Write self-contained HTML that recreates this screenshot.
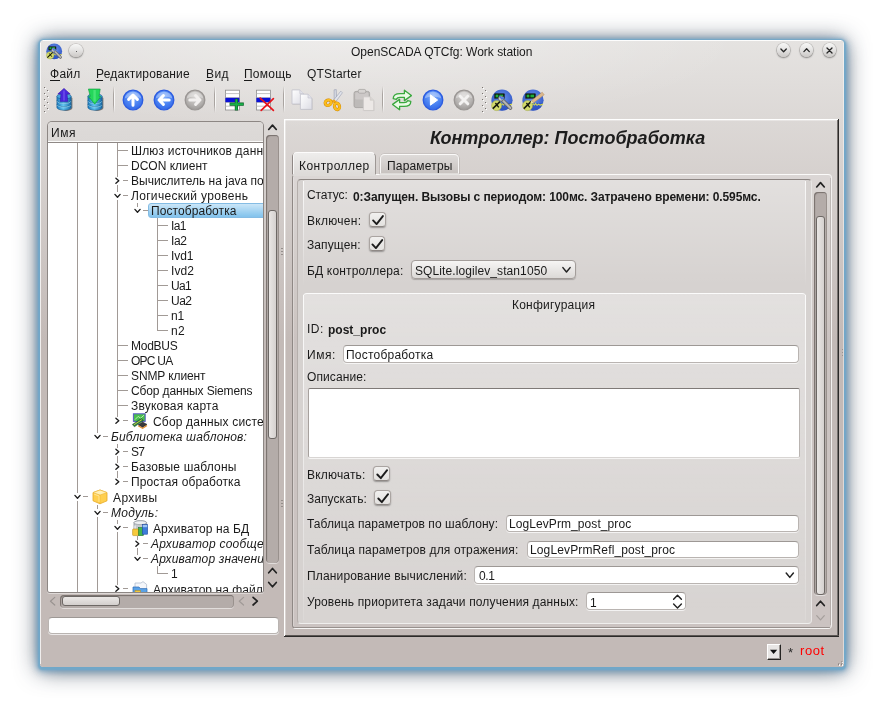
<!DOCTYPE html>
<html lang="ru">
<head>
<meta charset="utf-8">
<title>OpenSCADA QTCfg: Work station</title>
<style>
html,body{margin:0;padding:0;background:#fff;}
body{width:884px;height:707px;position:relative;overflow:hidden;font-family:"Liberation Sans",sans-serif;font-size:12px;}
div,span,svg{position:absolute;box-sizing:border-box;}
span{will-change:transform;}
svg{overflow:visible;}
.le{background:#fff;border:1px solid #b9b4b1;border-top-color:#9d9895;border-radius:4px;box-shadow:0 1px 0 rgba(255,255,255,.7);}
.cb{border-radius:3.5px;border:1px solid #aaa4a1;border-bottom-color:#8f8986;background:linear-gradient(#f1f0ef,#e3e1df);box-shadow:0 1px 1.5px rgba(0,0,0,.32);}
.wb{border-radius:50%;background:linear-gradient(#f7f7f6,#e6e5e4 45%,#cbc8c6);box-shadow:0 0 0 .6px rgba(90,85,82,.28),0 1px 1.5px .3px rgba(0,0,0,.3);}
</style>
</head>
<body>
<div style="left:40px;top:40px;width:804px;height:627px;border-radius:4px 4px 3px 3px;box-shadow:0 .8px 1.5px 1.6px rgba(112,168,202,.9),0 1.5px 5px 2.5px rgba(100,156,196,.6),0 2px 10px 3px rgba(80,130,175,.32),0 2px 23px 1px rgba(25,40,60,.74);background:radial-gradient(ellipse 400px 90px at 38% 0,rgba(255,255,255,.32),rgba(255,255,255,0)),linear-gradient(to bottom,#e5e3e1 0,#c3bab7 300px,#c3bab7 100%);"></div>
<div style="left:43px;top:40px;width:798px;height:1px;background:rgba(255,255,255,.9);"></div>
<div style="left:40px;top:43px;width:1px;height:621px;background:rgba(255,255,255,.75);"></div>
<div style="left:843px;top:43px;width:1px;height:621px;background:rgba(255,255,255,.45);"></div>
<svg style="left:46px;top:43px" width="16.4" height="16.4" viewBox="0 0 22 22"><circle cx="11" cy="11.2" r="10.6" fill="url(#gapp)"/><path d="M1.2 15 A10.6 10.6 0 0 0 20.8 15 L20.8 14 L1.2 14 Z" fill="#2a4fc0" opacity=".55"/><path d="M9.6 15.2 L11.4 14.2 L12.4 15.6 L13.6 13.6 L15 15.8 L16.6 14.4 L18 15.6 L21 14.6 L21 16 L18 16.8 L16.6 15.8 L15 17 L13.6 15.4 L12.4 16.8 L11.4 15.6 L9.6 16.4 Z" fill="#d8dc50"/><circle cx="5.6" cy="16.6" r="5" fill="#d3db6c" stroke="#9aa23a" stroke-width=".5"/><path d="M1.8 19.6 L9 12.6" stroke="#15180c" stroke-width="1.5"/><path d="M4.4 14 L7.8 18.4" stroke="#15180c" stroke-width="1.3"/><rect x="3.4" y="4.6" width="10.2" height="5" rx=".6" fill="#0c120e" stroke="#2c3a36" stroke-width=".4"/><rect x="4.6" y="5.6" width="2.8" height="2.8" fill="#1fae3a"/><rect x="8.4" y="5.6" width="3.8" height="2.8" fill="#1fae3a"/><path d="M10.4 10 L19.4 19" stroke="#5e5e5e" stroke-width="3.8" stroke-linecap="round"/><path d="M10.4 10 L19.4 19" stroke="#b4b4b4" stroke-width="2.3" stroke-linecap="round"/><circle cx="10" cy="9.6" r="2.6" fill="#c8c8c8" stroke="#5e5e5e" stroke-width=".8"/><path d="M8.4 7 L11 9.8 L12.8 8.2" fill="none" stroke="#4a78e0" stroke-width="1.6"/></svg>
<div class="wb" style="left:69.3px;top:43.6px;width:13.6px;height:13.6px"></div>
<div style="left:75.5px;top:50.5px;width:1.4px;height:1.4px;background:#333;border-radius:50%;"></div>
<span style='left:351.20px;top:44.14px;line-height:16px;font-family:"Liberation Sans", sans-serif;font-size:12px;color:#1a1a1a;white-space:pre;letter-spacing:-0.016px;'>OpenSCADA QTCfg: Work station</span>
<div class="wb" style="left:776.8000000000001px;top:43.4px;width:13.6px;height:13.6px"></div>
<svg style="left:773px;top:40px" width="20" height="20"><g transform="translate(10.60 10.30)"><path d="M-2.7 -1.3 L0 1.5 L2.7 -1.3" fill="none" stroke="#262626" stroke-width="1.3" stroke-linecap="round" stroke-linejoin="round"/></g></svg>
<div class="wb" style="left:799.8000000000001px;top:43.4px;width:13.6px;height:13.6px"></div>
<svg style="left:796px;top:40px" width="20" height="20"><g transform="translate(10.60 10.30)"><path d="M-2.7 1.3 L0 -1.5 L2.7 1.3" fill="none" stroke="#262626" stroke-width="1.3" stroke-linecap="round" stroke-linejoin="round"/></g></svg>
<div class="wb" style="left:822.7px;top:43.4px;width:13.6px;height:13.6px"></div>
<svg style="left:819px;top:40px" width="20" height="20"><g transform="translate(10.50 10.50)"><path d="M-2.5 -2.5 L2.5 2.5 M2.5 -2.5 L-2.5 2.5" fill="none" stroke="#262626" stroke-width="1.3" stroke-linecap="round" stroke-linejoin="round"/></g></svg>
<span style='left:50.00px;top:66.34px;line-height:16px;font-family:"Liberation Sans", sans-serif;font-size:12px;color:#1a1a1a;white-space:pre;letter-spacing:0.261px;'>Файл</span>
<div style="left:50.1px;top:79.6px;width:9.8px;height:1px;background:#1a1a1a;"></div>
<span style='left:96.20px;top:66.34px;line-height:16px;font-family:"Liberation Sans", sans-serif;font-size:12px;color:#1a1a1a;white-space:pre;letter-spacing:0.168px;'>Редактирование</span>
<div style="left:96.3px;top:79.6px;width:6.6px;height:1px;background:#1a1a1a;"></div>
<span style='left:205.80px;top:66.34px;line-height:16px;font-family:"Liberation Sans", sans-serif;font-size:12px;color:#1a1a1a;white-space:pre;letter-spacing:0.441px;'>Вид</span>
<div style="left:205.9px;top:79.6px;width:7.4px;height:1px;background:#1a1a1a;"></div>
<span style='left:243.90px;top:66.34px;line-height:16px;font-family:"Liberation Sans", sans-serif;font-size:12px;color:#1a1a1a;white-space:pre;letter-spacing:0.248px;'>Помощь</span>
<div style="left:244.0px;top:79.6px;width:8.2px;height:1px;background:#1a1a1a;"></div>
<span style='left:307.20px;top:66.34px;line-height:16px;font-family:"Liberation Sans", sans-serif;font-size:12px;color:#1a1a1a;white-space:pre;letter-spacing:0.227px;'>QTStarter</span>
<svg style="left:0;top:0" width="0" height="0"><defs>
<radialGradient id="gb" cx="50%" cy="35%" r="65%"><stop offset="0" stop-color="#86b2fb"/><stop offset=".6" stop-color="#4a82f2"/><stop offset="1" stop-color="#3468e6"/></radialGradient>
<radialGradient id="gg" cx="50%" cy="35%" r="65%"><stop offset="0" stop-color="#d8d6d4"/><stop offset=".6" stop-color="#b9b6b4"/><stop offset="1" stop-color="#9d9a98"/></radialGradient>
<linearGradient id="gdb" x1="0" x2="1"><stop offset="0" stop-color="#1b78bd"/><stop offset=".45" stop-color="#66c6f0"/><stop offset="1" stop-color="#176aa8"/></linearGradient>
<linearGradient id="gpg" x1="0" x2="1" y1="0" y2="1"><stop offset="0" stop-color="#ffffff"/><stop offset="1" stop-color="#dcdce4"/></linearGradient>
<radialGradient id="gapp" cx="50%" cy="40%" r="60%"><stop offset="0" stop-color="#6d97f0"/><stop offset="1" stop-color="#2f55c4"/></radialGradient>
</defs></svg>
<div style="left:44px;top:87px;width:1px;height:1px;background:#77726f;"></div>
<div style="left:45px;top:88px;width:1px;height:1px;background:#fff;"></div>
<div style="left:47px;top:90px;width:1px;height:1px;background:#77726f;"></div>
<div style="left:48px;top:91px;width:1px;height:1px;background:#fff;"></div>
<div style="left:44px;top:93px;width:1px;height:1px;background:#77726f;"></div>
<div style="left:45px;top:94px;width:1px;height:1px;background:#fff;"></div>
<div style="left:47px;top:96px;width:1px;height:1px;background:#77726f;"></div>
<div style="left:48px;top:97px;width:1px;height:1px;background:#fff;"></div>
<div style="left:44px;top:99px;width:1px;height:1px;background:#77726f;"></div>
<div style="left:45px;top:100px;width:1px;height:1px;background:#fff;"></div>
<div style="left:47px;top:102px;width:1px;height:1px;background:#77726f;"></div>
<div style="left:48px;top:103px;width:1px;height:1px;background:#fff;"></div>
<div style="left:44px;top:105px;width:1px;height:1px;background:#77726f;"></div>
<div style="left:45px;top:106px;width:1px;height:1px;background:#fff;"></div>
<div style="left:47px;top:108px;width:1px;height:1px;background:#77726f;"></div>
<div style="left:48px;top:109px;width:1px;height:1px;background:#fff;"></div>
<div style="left:44px;top:111px;width:1px;height:1px;background:#77726f;"></div>
<div style="left:45px;top:112px;width:1px;height:1px;background:#fff;"></div>
<div style="left:482px;top:87px;width:1px;height:1px;background:#77726f;"></div>
<div style="left:483px;top:88px;width:1px;height:1px;background:#fff;"></div>
<div style="left:485px;top:90px;width:1px;height:1px;background:#77726f;"></div>
<div style="left:486px;top:91px;width:1px;height:1px;background:#fff;"></div>
<div style="left:482px;top:93px;width:1px;height:1px;background:#77726f;"></div>
<div style="left:483px;top:94px;width:1px;height:1px;background:#fff;"></div>
<div style="left:485px;top:96px;width:1px;height:1px;background:#77726f;"></div>
<div style="left:486px;top:97px;width:1px;height:1px;background:#fff;"></div>
<div style="left:482px;top:99px;width:1px;height:1px;background:#77726f;"></div>
<div style="left:483px;top:100px;width:1px;height:1px;background:#fff;"></div>
<div style="left:485px;top:102px;width:1px;height:1px;background:#77726f;"></div>
<div style="left:486px;top:103px;width:1px;height:1px;background:#fff;"></div>
<div style="left:482px;top:105px;width:1px;height:1px;background:#77726f;"></div>
<div style="left:483px;top:106px;width:1px;height:1px;background:#fff;"></div>
<div style="left:485px;top:108px;width:1px;height:1px;background:#77726f;"></div>
<div style="left:486px;top:109px;width:1px;height:1px;background:#fff;"></div>
<div style="left:482px;top:111px;width:1px;height:1px;background:#77726f;"></div>
<div style="left:483px;top:112px;width:1px;height:1px;background:#fff;"></div>
<div style="left:113.4px;top:86px;width:1px;height:27px;background:linear-gradient(rgba(150,144,140,0),rgba(150,144,140,.75) 30%,rgba(150,144,140,.75) 70%,rgba(150,144,140,0));"></div>
<div style="left:114.4px;top:86px;width:1px;height:27px;background:linear-gradient(rgba(255,255,255,0),rgba(255,255,255,.8) 30%,rgba(255,255,255,.8) 70%,rgba(255,255,255,0));"></div>
<div style="left:213.79999999999998px;top:86px;width:1px;height:27px;background:linear-gradient(rgba(150,144,140,0),rgba(150,144,140,.75) 30%,rgba(150,144,140,.75) 70%,rgba(150,144,140,0));"></div>
<div style="left:214.79999999999998px;top:86px;width:1px;height:27px;background:linear-gradient(rgba(255,255,255,0),rgba(255,255,255,.8) 30%,rgba(255,255,255,.8) 70%,rgba(255,255,255,0));"></div>
<div style="left:282.7px;top:86px;width:1px;height:27px;background:linear-gradient(rgba(150,144,140,0),rgba(150,144,140,.75) 30%,rgba(150,144,140,.75) 70%,rgba(150,144,140,0));"></div>
<div style="left:283.7px;top:86px;width:1px;height:27px;background:linear-gradient(rgba(255,255,255,0),rgba(255,255,255,.8) 30%,rgba(255,255,255,.8) 70%,rgba(255,255,255,0));"></div>
<div style="left:382.2px;top:86px;width:1px;height:27px;background:linear-gradient(rgba(150,144,140,0),rgba(150,144,140,.75) 30%,rgba(150,144,140,.75) 70%,rgba(150,144,140,0));"></div>
<div style="left:383.2px;top:86px;width:1px;height:27px;background:linear-gradient(rgba(255,255,255,0),rgba(255,255,255,.8) 30%,rgba(255,255,255,.8) 70%,rgba(255,255,255,0));"></div>
<svg style="left:53.2px;top:89px" width="22" height="22" viewBox="0 0 22 22"><path d="M18.1 8 V18.6 A7.1 2.8 0 0 1 9 21 L12 22 A8 3 0 0 0 19.4 18.8 V9 Z" fill="rgba(20,20,20,.5)"/><path d="M3.9 7.4 V18.4 A7.1 2.8 0 0 0 18.1 18.4 V7.4 Z" fill="url(#gdb)" stroke="#155a8e" stroke-width=".6"/><path d="M3.9 11.4 A7.1 2.7 0 0 0 18.1 11.4 M3.9 15 A7.1 2.7 0 0 0 18.1 15" fill="none" stroke="#135584" stroke-width=".8" opacity=".75"/><path d="M4.2 12.4 A7 2.7 0 0 0 17.8 12.4 M4.2 16 A7 2.7 0 0 0 17.8 16" fill="none" stroke="#a8e6fc" stroke-width=".8" opacity=".8"/><ellipse cx="11" cy="7.4" rx="7.1" ry="2.7" fill="#4aa8de" stroke="#155a8e" stroke-width=".6"/><path d="M11 -0.6 L17.2 5 L14 5 L14.8 12.4 L7.2 12.4 L8 5 L4.8 5 Z" fill="#4a28dc" stroke="#3318a8" stroke-width=".6" stroke-linejoin="round"/><path d="M11 1.4 L11 11.6" stroke="#7a5cf0" stroke-width="2" opacity=".55"/></svg>
<svg style="left:84.4px;top:89px" width="22" height="22" viewBox="0 0 22 22"><path d="M18.1 8 V18.6 A7.1 2.8 0 0 1 9 21 L12 22 A8 3 0 0 0 19.4 18.8 V9 Z" fill="rgba(20,20,20,.5)"/><path d="M3.9 7.4 V18.4 A7.1 2.8 0 0 0 18.1 18.4 V7.4 Z" fill="url(#gdb)" stroke="#155a8e" stroke-width=".6"/><path d="M3.9 11.4 A7.1 2.7 0 0 0 18.1 11.4 M3.9 15 A7.1 2.7 0 0 0 18.1 15" fill="none" stroke="#135584" stroke-width=".8" opacity=".75"/><path d="M4.2 12.4 A7 2.7 0 0 0 17.8 12.4 M4.2 16 A7 2.7 0 0 0 17.8 16" fill="none" stroke="#a8e6fc" stroke-width=".8" opacity=".8"/><ellipse cx="11" cy="7.4" rx="7.1" ry="2.7" fill="#4aa8de" stroke="#155a8e" stroke-width=".6"/><path d="M4.4 0 L16.2 0 L15 7.4 L16.9 7.4 L10.7 15.2 L4.5 7.4 L6.3 7.4 Z" fill="#24d65a" stroke="#0e9a3a" stroke-width=".6" stroke-linejoin="round"/><path d="M10.6 1 L10.6 12.6" stroke="#6af090" stroke-width="2.4" opacity=".5"/></svg>
<svg style="left:122.0px;top:88.9px" width="22" height="22" viewBox="0 0 22 22"><circle cx="11" cy="11" r="9.8" fill="url(#gb)" stroke="#2c5ce0" stroke-width="1.3"/><path d="M2.6 9.4 A8.6 8.6 0 0 1 19.4 9.4 A13 8 0 0 0 2.6 9.4Z" fill="#fff" opacity=".33"/><path d="M11 6.2 V16.2 M6.6 10.4 L11 6 L15.4 10.4" stroke="#fff" stroke-width="3" fill="none" stroke-linecap="round" stroke-linejoin="round"/></svg>
<svg style="left:153.2px;top:88.9px" width="22" height="22" viewBox="0 0 22 22"><circle cx="11" cy="11" r="9.8" fill="url(#gb)" stroke="#2c5ce0" stroke-width="1.3"/><path d="M2.6 9.4 A8.6 8.6 0 0 1 19.4 9.4 A13 8 0 0 0 2.6 9.4Z" fill="#fff" opacity=".33"/><path d="M6.2 11 H16.2 M10.4 6.6 L6 11 L10.4 15.4" stroke="#fff" stroke-width="3" fill="none" stroke-linecap="round" stroke-linejoin="round"/></svg>
<svg style="left:184.2px;top:88.9px" width="22" height="22" viewBox="0 0 22 22"><circle cx="11" cy="11" r="9.8" fill="url(#gg)" stroke="#9a9694" stroke-width="1.3"/><path d="M2.6 9.4 A8.6 8.6 0 0 1 19.4 9.4 A13 8 0 0 0 2.6 9.4Z" fill="#fff" opacity=".33"/><path d="M15.8 11 H5.8 M11.6 6.6 L16 11 L11.6 15.4" stroke="#f2f0ef" stroke-width="3" fill="none" stroke-linecap="round" stroke-linejoin="round"/></svg>
<svg style="left:422.0px;top:88.9px" width="22" height="22" viewBox="0 0 22 22"><circle cx="11" cy="11" r="9.8" fill="url(#gb)" stroke="#2c5ce0" stroke-width="1.3"/><path d="M2.6 9.4 A8.6 8.6 0 0 1 19.4 9.4 A13 8 0 0 0 2.6 9.4Z" fill="#fff" opacity=".33"/><path d="M8.4 5.8 L15.6 11 L8.4 16.2 Z" fill="#fff" stroke="#fff" stroke-width="1" stroke-linejoin="round"/></svg>
<svg style="left:453.3px;top:88.9px" width="22" height="22" viewBox="0 0 22 22"><circle cx="11" cy="11" r="9.8" fill="url(#gg)" stroke="#9a9694" stroke-width="1.3"/><path d="M2.6 9.4 A8.6 8.6 0 0 1 19.4 9.4 A13 8 0 0 0 2.6 9.4Z" fill="#fff" opacity=".33"/><path d="M7.2 7.2 L14.8 14.8 M14.8 7.2 L7.2 14.8" stroke="#f3f2f1" stroke-width="3" stroke-linecap="round"/></svg>
<svg style="left:224.0px;top:89px" width="22" height="22" viewBox="0 0 22 22"><rect x="1.4" y="1.2" width="14" height="19.8" fill="#fff" stroke="#8c8c8c" stroke-width=".8"/><path d="M1.4 4.6 H15.4 M1.4 8.6 H15.4 M1.4 13.4 H15.4 M1.4 17.2 H15.4" stroke="#b4b4b4" stroke-width=".8"/><rect x="1.4" y="8.8" width="14" height="4.4" fill="#0a10d8"/><path d="M12.4 9.8 V21.6 M5.6 15.2 H19.8" stroke="#0c5a24" stroke-width="3.2"/><path d="M12.4 10.3 V21.1 M6.1 15.2 H19.3" stroke="#18b048" stroke-width="2"/></svg>
<svg style="left:255.0px;top:89px" width="22" height="22" viewBox="0 0 22 22"><rect x="1.4" y="1.2" width="14" height="19.8" fill="#fff" stroke="#8c8c8c" stroke-width=".8"/><path d="M1.4 4.6 H15.4 M1.4 8.6 H15.4 M1.4 13.4 H15.4 M1.4 17.2 H15.4" stroke="#b4b4b4" stroke-width=".8"/><rect x="1.4" y="8.8" width="14" height="4.4" fill="#0a10d8"/><path d="M5.2 9.2 L18.4 21.4 M18.4 9.6 L6.2 21.4" stroke="#e8141c" stroke-width="1.7" stroke-linecap="round"/></svg>
<svg style="left:291px;top:89px" width="22" height="22" viewBox="0 0 22 22"><path d="M1.6 2 H9.4 L13 5.4 V15.8 H1.6Z" fill="rgba(0,0,0,.10)"/><path d="M1 .9 H8.8 L12.5 4.6 V15 H1Z" fill="url(#gpg)" stroke="#c2c2cc" stroke-width=".8"/><path d="M8.8 .9 V4.6 H12.5" fill="#e2e2ea" stroke="#c2c2cc" stroke-width=".6"/><path d="M10 6.4 H17.6 L21.6 10 V21 H10Z" fill="rgba(0,0,0,.10)"/><path d="M9.4 5.2 H17 L20.9 9 V20.4 H9.4Z" fill="url(#gpg)" stroke="#c2c2cc" stroke-width=".8"/><path d="M17 5.2 V9 H20.9" fill="#e2e2ea" stroke="#c2c2cc" stroke-width=".6"/></svg>
<svg style="left:322px;top:89px" width="22" height="22" viewBox="0 0 22 22"><path d="M12.1 .8 L14.3 .6 L14.6 11.2 L12.2 12 Z" fill="#d4d8e2" stroke="#8a90a6" stroke-width=".5"/><path d="M18.8 2.2 L20.4 3.8 L13.8 12.6 L11.6 11 Z" fill="#e2e5ec" stroke="#8a90a6" stroke-width=".5"/><path d="M8.4 12 L12.4 10.4 L14.2 12.6 L14.6 14.6 L12.6 14.4 L11 13.4 Z" fill="#f2a818"/><ellipse cx="6.2" cy="13.7" rx="3.1" ry="2.6" transform="rotate(-22 6.2 13.7)" fill="none" stroke="#c98208" stroke-width="3.1"/><ellipse cx="6.2" cy="13.7" rx="3.1" ry="2.6" transform="rotate(-22 6.2 13.7)" fill="none" stroke="#fbbc1c" stroke-width="2.2"/><ellipse cx="15" cy="17.4" rx="2.5" ry="3.3" transform="rotate(-18 15 17.4)" fill="none" stroke="#c98208" stroke-width="3.1"/><ellipse cx="15" cy="17.4" rx="2.5" ry="3.3" transform="rotate(-18 15 17.4)" fill="none" stroke="#fbbc1c" stroke-width="2.2"/></svg>
<svg style="left:353px;top:89px" width="22" height="22" viewBox="0 0 22 22"><rect x="1" y="2.4" width="15.6" height="16.2" rx="2" fill="#bdbab8" stroke="#a29f9d" stroke-width=".8"/><rect x="2.2" y="3.6" width="13.2" height="7" rx="1.4" fill="#cfccca" opacity=".8"/><rect x="5.2" y=".4" width="7.6" height="3.8" rx="1.6" fill="#d6d3d1" stroke="#a29f9d" stroke-width=".7"/><path d="M11 8.8 H17.8 L21.2 12 V22 H11Z" fill="rgba(0,0,0,.12)"/><path d="M10.4 7.8 H17.2 L20.8 11.2 V21.6 H10.4Z" fill="#ece8e6" stroke="#cbc7c5" stroke-width=".8"/><path d="M17.2 7.8 V11.2 H20.8" fill="#d9d5d3" stroke="#cbc7c5" stroke-width=".6"/></svg>
<svg style="left:391px;top:88.6px" width="22" height="22" viewBox="0 0 22 22"><path d="M2.2 9.6 C2.2 5.4 6 4.6 9 4.6 H13.4 V1.2 L20.4 6.6 L13.4 11.6 V8.4 H9 C7 8.4 6 8.8 5.2 10.4 Z" fill="#eafbe6" stroke="#3aa83e" stroke-width="1.3" stroke-linejoin="round"/><path d="M19.8 12.4 C19.8 16.6 16 17.4 13 17.4 H8.6 V20.8 L1.6 15.4 L8.6 10.4 V13.6 H13 C15 13.6 16 13.2 16.8 11.6 Z" fill="#eafbe6" stroke="#3aa83e" stroke-width="1.3" stroke-linejoin="round"/></svg>
<svg style="left:491.0px;top:88.8px" width="22" height="22" viewBox="0 0 22 22"><circle cx="11" cy="11.2" r="10.6" fill="url(#gapp)"/><path d="M1.2 15 A10.6 10.6 0 0 0 20.8 15 L20.8 14 L1.2 14 Z" fill="#2a4fc0" opacity=".55"/><path d="M9.6 15.2 L11.4 14.2 L12.4 15.6 L13.6 13.6 L15 15.8 L16.6 14.4 L18 15.6 L21 14.6 L21 16 L18 16.8 L16.6 15.8 L15 17 L13.6 15.4 L12.4 16.8 L11.4 15.6 L9.6 16.4 Z" fill="#d8dc50"/><circle cx="5.6" cy="16.6" r="5" fill="#d3db6c" stroke="#9aa23a" stroke-width=".5"/><path d="M1.8 19.6 L9 12.6" stroke="#15180c" stroke-width="1.5"/><path d="M4.4 14 L7.8 18.4" stroke="#15180c" stroke-width="1.3"/><rect x="3.4" y="4.6" width="10.2" height="5" rx=".6" fill="#0c120e" stroke="#2c3a36" stroke-width=".4"/><rect x="4.6" y="5.6" width="2.8" height="2.8" fill="#1fae3a"/><rect x="8.4" y="5.6" width="3.8" height="2.8" fill="#1fae3a"/><path d="M10.4 10 L19.4 19" stroke="#5e5e5e" stroke-width="3.8" stroke-linecap="round"/><path d="M10.4 10 L19.4 19" stroke="#b4b4b4" stroke-width="2.3" stroke-linecap="round"/><circle cx="10" cy="9.6" r="2.6" fill="#c8c8c8" stroke="#5e5e5e" stroke-width=".8"/><path d="M8.4 7 L11 9.8 L12.8 8.2" fill="none" stroke="#4a78e0" stroke-width="1.6"/></svg>
<svg style="left:522.0px;top:88.8px" width="22" height="22" viewBox="0 0 22 22"><circle cx="11" cy="11.2" r="10.6" fill="url(#gapp)"/><path d="M1.2 15 A10.6 10.6 0 0 0 20.8 15 L20.8 14 L1.2 14 Z" fill="#2a4fc0" opacity=".55"/><path d="M9.6 15.2 L11.4 14.2 L12.4 15.6 L13.6 13.6 L15 15.8 L16.6 14.4 L18 15.6 L21 14.6 L21 16 L18 16.8 L16.6 15.8 L15 17 L13.6 15.4 L12.4 16.8 L11.4 15.6 L9.6 16.4 Z" fill="#d8dc50"/><circle cx="5.6" cy="16.6" r="5" fill="#d3db6c" stroke="#9aa23a" stroke-width=".5"/><path d="M1.8 19.6 L9 12.6" stroke="#15180c" stroke-width="1.5"/><path d="M4.4 14 L7.8 18.4" stroke="#15180c" stroke-width="1.3"/><rect x="3.4" y="4.6" width="10.2" height="5" rx=".6" fill="#0c120e" stroke="#2c3a36" stroke-width=".4"/><rect x="4.6" y="5.6" width="2.8" height="2.8" fill="#1fae3a"/><rect x="8.4" y="5.6" width="3.8" height="2.8" fill="#1fae3a"/><path d="M9.6 11.4 L20.2 3.2 L22.2 5.8 L11.4 14 Z" fill="#dcb88c" stroke="#b08a60" stroke-width=".5"/><path d="M9.6 11.4 L11.4 14 L8.2 14.2 Z" fill="#e8e2a0"/></svg>
<div style="left:48px;top:122px;width:215px;height:470px;border-radius:4px 4px 2px 2px;box-shadow:0 0 0 1px #8d8784,0 1px 0 1px rgba(255,255,255,.45);background:linear-gradient(#dddad8,#dbd8d6 21px,#fff 21px);"></div>
<div style="left:48px;top:141px;width:215px;height:1px;background:#fbfbfa;"></div>
<div style="left:48px;top:142px;width:215px;height:1px;background:#8f8986;"></div>
<span style='left:51.10px;top:125.44px;line-height:16px;font-family:"Liberation Sans", sans-serif;font-size:12px;color:#1a1a1a;white-space:pre;letter-spacing:0.613px;'>Имя</span>
<div style="left:48px;top:143px;width:215px;height:449px;overflow:hidden;">
<div style="left:29px;top:0.3px;width:1px;height:15px;background:#a19a96;"></div>
<div style="left:49px;top:0.3px;width:1px;height:15px;background:#a19a96;"></div>
<div style="left:69px;top:0.3px;width:1px;height:15px;background:#a19a96;"></div>
<div style="left:69px;top:7px;width:11px;height:1px;background:#a19a96;"></div>
<span style='left:82.90px;top:0.14px;line-height:16px;font-family:"Liberation Sans", sans-serif;font-size:12px;color:#1a1a1a;white-space:pre;letter-spacing:0.185px;'>Шлюз источников данных</span>
<div style="left:29px;top:15.3px;width:1px;height:15px;background:#a19a96;"></div>
<div style="left:49px;top:15.3px;width:1px;height:15px;background:#a19a96;"></div>
<div style="left:69px;top:15.3px;width:1px;height:15px;background:#a19a96;"></div>
<div style="left:69px;top:22px;width:11px;height:1px;background:#a19a96;"></div>
<span style='left:82.90px;top:15.14px;line-height:16px;font-family:"Liberation Sans", sans-serif;font-size:12px;color:#1a1a1a;white-space:pre;letter-spacing:-0.006px;'>DCON клиент</span>
<div style="left:29px;top:30.3px;width:1px;height:15px;background:#a19a96;"></div>
<div style="left:49px;top:30.3px;width:1px;height:15px;background:#a19a96;"></div>
<div style="left:69px;top:30.3px;width:1px;height:4.0px;background:#a19a96;"></div>
<div style="left:69px;top:41.8px;width:1px;height:3.5px;background:#a19a96;"></div>
<div style="left:75px;top:37px;width:5px;height:1px;background:#a19a96;"></div>
<svg style="left:59px;top:27px" width="20" height="20"><g transform="translate(10.50 10.80)"><path d="M-1.6 -2.5 L1.3 0 L-1.6 2.5" fill="none" stroke="#1c1c1c" stroke-width="1.35" stroke-linecap="round" stroke-linejoin="round"/></g></svg>
<span style='left:82.90px;top:30.14px;line-height:16px;font-family:"Liberation Sans", sans-serif;font-size:12px;color:#1a1a1a;white-space:pre;letter-spacing:0.006px;'>Вычислитель на java подобном языке</span>
<div style="left:29px;top:45.3px;width:1px;height:15px;background:#a19a96;"></div>
<div style="left:49px;top:45.3px;width:1px;height:15px;background:#a19a96;"></div>
<div style="left:69px;top:45.3px;width:1px;height:4.0px;background:#a19a96;"></div>
<div style="left:69px;top:56.8px;width:1px;height:3.5px;background:#a19a96;"></div>
<div style="left:75px;top:52px;width:5px;height:1px;background:#a19a96;"></div>
<svg style="left:59px;top:42px" width="20" height="20"><g transform="translate(10.50 10.80)"><path d="M-2.6 -1.4 L0 1.4 L2.6 -1.4" fill="none" stroke="#1c1c1c" stroke-width="1.35" stroke-linecap="round" stroke-linejoin="round"/></g></svg>
<span style='left:82.90px;top:45.14px;line-height:16px;font-family:"Liberation Sans", sans-serif;font-size:12px;color:#1a1a1a;white-space:pre;letter-spacing:0.314px;'>Логический уровень</span>
<div style="left:29px;top:60.3px;width:1px;height:15px;background:#a19a96;"></div>
<div style="left:49px;top:60.3px;width:1px;height:15px;background:#a19a96;"></div>
<div style="left:69px;top:60.3px;width:1px;height:15px;background:#a19a96;"></div>
<div style="left:89px;top:60.3px;width:1px;height:4.0px;background:#a19a96;"></div>
<div style="left:95px;top:67px;width:5px;height:1px;background:#a19a96;"></div>
<svg style="left:79px;top:57px" width="20" height="20"><g transform="translate(10.50 10.80)"><path d="M-2.6 -1.4 L0 1.4 L2.6 -1.4" fill="none" stroke="#1c1c1c" stroke-width="1.35" stroke-linecap="round" stroke-linejoin="round"/></g></svg>
<div style="left:100.2px;top:60.0px;width:118.80000000000001px;height:15.2px;border-radius:3px;border:1px solid #84bce4;background:linear-gradient(#cbe6f8,#8cc8ee 85%,#84c2ec);"></div>
<span style='left:102.90px;top:60.14px;line-height:16px;font-family:"Liberation Sans", sans-serif;font-size:12px;color:#1a1a1a;white-space:pre;letter-spacing:0.072px;'>Постобработка</span>
<div style="left:29px;top:75.3px;width:1px;height:15px;background:#a19a96;"></div>
<div style="left:49px;top:75.3px;width:1px;height:15px;background:#a19a96;"></div>
<div style="left:69px;top:75.3px;width:1px;height:15px;background:#a19a96;"></div>
<div style="left:109px;top:75.3px;width:1px;height:15px;background:#a19a96;"></div>
<div style="left:109px;top:82px;width:11px;height:1px;background:#a19a96;"></div>
<span style='left:122.90px;top:75.14px;line-height:16px;font-family:"Liberation Sans", sans-serif;font-size:12px;color:#1a1a1a;white-space:pre;letter-spacing:-0.644px;'>Ia1</span>
<div style="left:29px;top:90.3px;width:1px;height:15px;background:#a19a96;"></div>
<div style="left:49px;top:90.3px;width:1px;height:15px;background:#a19a96;"></div>
<div style="left:69px;top:90.3px;width:1px;height:15px;background:#a19a96;"></div>
<div style="left:109px;top:90.3px;width:1px;height:15px;background:#a19a96;"></div>
<div style="left:109px;top:97px;width:11px;height:1px;background:#a19a96;"></div>
<span style='left:122.90px;top:90.14px;line-height:16px;font-family:"Liberation Sans", sans-serif;font-size:12px;color:#1a1a1a;white-space:pre;letter-spacing:-0.344px;'>Ia2</span>
<div style="left:29px;top:105.3px;width:1px;height:15px;background:#a19a96;"></div>
<div style="left:49px;top:105.3px;width:1px;height:15px;background:#a19a96;"></div>
<div style="left:69px;top:105.3px;width:1px;height:15px;background:#a19a96;"></div>
<div style="left:109px;top:105.3px;width:1px;height:15px;background:#a19a96;"></div>
<div style="left:109px;top:112px;width:11px;height:1px;background:#a19a96;"></div>
<span style='left:122.90px;top:105.14px;line-height:16px;font-family:"Liberation Sans", sans-serif;font-size:12px;color:#1a1a1a;white-space:pre;letter-spacing:-0.096px;'>Ivd1</span>
<div style="left:29px;top:120.3px;width:1px;height:15px;background:#a19a96;"></div>
<div style="left:49px;top:120.3px;width:1px;height:15px;background:#a19a96;"></div>
<div style="left:69px;top:120.3px;width:1px;height:15px;background:#a19a96;"></div>
<div style="left:109px;top:120.3px;width:1px;height:15px;background:#a19a96;"></div>
<div style="left:109px;top:127px;width:11px;height:1px;background:#a19a96;"></div>
<span style='left:122.90px;top:120.14px;line-height:16px;font-family:"Liberation Sans", sans-serif;font-size:12px;color:#1a1a1a;white-space:pre;letter-spacing:0.104px;'>Ivd2</span>
<div style="left:29px;top:135.3px;width:1px;height:15px;background:#a19a96;"></div>
<div style="left:49px;top:135.3px;width:1px;height:15px;background:#a19a96;"></div>
<div style="left:69px;top:135.3px;width:1px;height:15px;background:#a19a96;"></div>
<div style="left:109px;top:135.3px;width:1px;height:15px;background:#a19a96;"></div>
<div style="left:109px;top:142px;width:11px;height:1px;background:#a19a96;"></div>
<span style='left:122.90px;top:135.14px;line-height:16px;font-family:"Liberation Sans", sans-serif;font-size:12px;color:#1a1a1a;white-space:pre;letter-spacing:-0.708px;'>Ua1</span>
<div style="left:29px;top:150.3px;width:1px;height:15px;background:#a19a96;"></div>
<div style="left:49px;top:150.3px;width:1px;height:15px;background:#a19a96;"></div>
<div style="left:69px;top:150.3px;width:1px;height:15px;background:#a19a96;"></div>
<div style="left:109px;top:150.3px;width:1px;height:15px;background:#a19a96;"></div>
<div style="left:109px;top:157px;width:11px;height:1px;background:#a19a96;"></div>
<span style='left:122.90px;top:150.14px;line-height:16px;font-family:"Liberation Sans", sans-serif;font-size:12px;color:#1a1a1a;white-space:pre;letter-spacing:-0.508px;'>Ua2</span>
<div style="left:29px;top:165.3px;width:1px;height:15px;background:#a19a96;"></div>
<div style="left:49px;top:165.3px;width:1px;height:15px;background:#a19a96;"></div>
<div style="left:69px;top:165.3px;width:1px;height:15px;background:#a19a96;"></div>
<div style="left:109px;top:165.3px;width:1px;height:15px;background:#a19a96;"></div>
<div style="left:109px;top:172px;width:11px;height:1px;background:#a19a96;"></div>
<span style='left:122.90px;top:165.14px;line-height:16px;font-family:"Liberation Sans", sans-serif;font-size:12px;color:#1a1a1a;white-space:pre;letter-spacing:-0.159px;'>n1</span>
<div style="left:29px;top:180.3px;width:1px;height:15px;background:#a19a96;"></div>
<div style="left:49px;top:180.3px;width:1px;height:15px;background:#a19a96;"></div>
<div style="left:69px;top:180.3px;width:1px;height:15px;background:#a19a96;"></div>
<div style="left:109px;top:180.3px;width:1px;height:8.0px;background:#a19a96;"></div>
<div style="left:109px;top:187px;width:11px;height:1px;background:#a19a96;"></div>
<span style='left:122.90px;top:180.14px;line-height:16px;font-family:"Liberation Sans", sans-serif;font-size:12px;color:#1a1a1a;white-space:pre;letter-spacing:0.441px;'>n2</span>
<div style="left:29px;top:195.3px;width:1px;height:15px;background:#a19a96;"></div>
<div style="left:49px;top:195.3px;width:1px;height:15px;background:#a19a96;"></div>
<div style="left:69px;top:195.3px;width:1px;height:15px;background:#a19a96;"></div>
<div style="left:69px;top:202px;width:11px;height:1px;background:#a19a96;"></div>
<span style='left:82.90px;top:195.14px;line-height:16px;font-family:"Liberation Sans", sans-serif;font-size:12px;color:#1a1a1a;white-space:pre;letter-spacing:-0.246px;'>ModBUS</span>
<div style="left:29px;top:210.3px;width:1px;height:15px;background:#a19a96;"></div>
<div style="left:49px;top:210.3px;width:1px;height:15px;background:#a19a96;"></div>
<div style="left:69px;top:210.3px;width:1px;height:15px;background:#a19a96;"></div>
<div style="left:69px;top:217px;width:11px;height:1px;background:#a19a96;"></div>
<span style='left:82.90px;top:210.14px;line-height:16px;font-family:"Liberation Sans", sans-serif;font-size:12px;color:#1a1a1a;white-space:pre;letter-spacing:-0.763px;'>OPC UA</span>
<div style="left:29px;top:225.3px;width:1px;height:15px;background:#a19a96;"></div>
<div style="left:49px;top:225.3px;width:1px;height:15px;background:#a19a96;"></div>
<div style="left:69px;top:225.3px;width:1px;height:15px;background:#a19a96;"></div>
<div style="left:69px;top:232px;width:11px;height:1px;background:#a19a96;"></div>
<span style='left:82.90px;top:225.14px;line-height:16px;font-family:"Liberation Sans", sans-serif;font-size:12px;color:#1a1a1a;white-space:pre;letter-spacing:-0.109px;'>SNMP клиент</span>
<div style="left:29px;top:240.3px;width:1px;height:15px;background:#a19a96;"></div>
<div style="left:49px;top:240.3px;width:1px;height:15px;background:#a19a96;"></div>
<div style="left:69px;top:240.3px;width:1px;height:15px;background:#a19a96;"></div>
<div style="left:69px;top:247px;width:11px;height:1px;background:#a19a96;"></div>
<span style='left:82.90px;top:240.14px;line-height:16px;font-family:"Liberation Sans", sans-serif;font-size:12px;color:#1a1a1a;white-space:pre;letter-spacing:-0.122px;'>Сбор данных Siemens</span>
<div style="left:29px;top:255.3px;width:1px;height:15px;background:#a19a96;"></div>
<div style="left:49px;top:255.3px;width:1px;height:15px;background:#a19a96;"></div>
<div style="left:69px;top:255.3px;width:1px;height:15px;background:#a19a96;"></div>
<div style="left:69px;top:262px;width:11px;height:1px;background:#a19a96;"></div>
<span style='left:82.90px;top:255.14px;line-height:16px;font-family:"Liberation Sans", sans-serif;font-size:12px;color:#1a1a1a;white-space:pre;letter-spacing:0.193px;'>Звуковая карта</span>
<div style="left:29px;top:270.3px;width:1px;height:16px;background:#a19a96;"></div>
<div style="left:49px;top:270.3px;width:1px;height:16px;background:#a19a96;"></div>
<div style="left:69px;top:270.3px;width:1px;height:4.0px;background:#a19a96;"></div>
<div style="left:75px;top:277px;width:5px;height:1px;background:#a19a96;"></div>
<svg style="left:59px;top:267px" width="20" height="20"><g transform="translate(10.50 10.80)"><path d="M-1.6 -2.5 L1.3 0 L-1.6 2.5" fill="none" stroke="#1c1c1c" stroke-width="1.35" stroke-linecap="round" stroke-linejoin="round"/></g></svg>
<svg style="left:83.5px;top:270.3px" width="16" height="16" viewBox="0 0 16 16"><rect x="1.4" y=".8" width="11.8" height="7.6" fill="#48bc4e" stroke="#5a5ac6" stroke-width="1"/><path d="M3 6.6 L6.2 3.4 L8.6 5.2 L12 2.2" stroke="#b4f4a4" stroke-width="1" fill="none"/><path d="M.4 11.4 L9.4 5.4 L11.4 7.6 L2.4 13.8 Z" fill="#2a7c40" stroke="#184a28" stroke-width=".5"/><path d="M1.8 11.9 L9.8 6.7" stroke="#d6d044" stroke-width=".9"/><path d="M6.2 11.8 L10.6 9 L15 11.4 L10.6 14.4 Z" fill="#38383a" stroke="#1c1c1e" stroke-width=".5"/><path d="M6.2 12.8 L10.6 15.4 L15 12.4" stroke="#e28a2a" stroke-width="1.2" fill="none"/></svg>
<span style='left:104.80px;top:270.64px;line-height:16px;font-family:"Liberation Sans", sans-serif;font-size:12px;color:#1a1a1a;white-space:pre;letter-spacing:0.178px;'>Сбор данных системы</span>
<div style="left:29px;top:286.3px;width:1px;height:15px;background:#a19a96;"></div>
<div style="left:49px;top:286.3px;width:1px;height:4.0px;background:#a19a96;"></div>
<div style="left:55px;top:293px;width:5px;height:1px;background:#a19a96;"></div>
<svg style="left:39px;top:283px" width="20" height="20"><g transform="translate(10.50 10.80)"><path d="M-2.6 -1.4 L0 1.4 L2.6 -1.4" fill="none" stroke="#1c1c1c" stroke-width="1.35" stroke-linecap="round" stroke-linejoin="round"/></g></svg>
<span style='left:62.90px;top:286.14px;line-height:16px;font-family:"Liberation Sans", sans-serif;font-size:12px;font-style:italic;color:#1a1a1a;white-space:pre;letter-spacing:0.154px;'>Библиотека шаблонов:</span>
<div style="left:29px;top:301.3px;width:1px;height:15px;background:#a19a96;"></div>
<div style="left:69px;top:301.3px;width:1px;height:4.0px;background:#a19a96;"></div>
<div style="left:69px;top:312.8px;width:1px;height:3.5px;background:#a19a96;"></div>
<div style="left:75px;top:308px;width:5px;height:1px;background:#a19a96;"></div>
<svg style="left:59px;top:298px" width="20" height="20"><g transform="translate(10.50 10.80)"><path d="M-1.6 -2.5 L1.3 0 L-1.6 2.5" fill="none" stroke="#1c1c1c" stroke-width="1.35" stroke-linecap="round" stroke-linejoin="round"/></g></svg>
<span style='left:82.90px;top:301.14px;line-height:16px;font-family:"Liberation Sans", sans-serif;font-size:12px;color:#1a1a1a;white-space:pre;letter-spacing:-0.800px;'>S7</span>
<div style="left:29px;top:316.3px;width:1px;height:15px;background:#a19a96;"></div>
<div style="left:69px;top:316.3px;width:1px;height:4.0px;background:#a19a96;"></div>
<div style="left:69px;top:327.8px;width:1px;height:3.5px;background:#a19a96;"></div>
<div style="left:75px;top:323px;width:5px;height:1px;background:#a19a96;"></div>
<svg style="left:59px;top:313px" width="20" height="20"><g transform="translate(10.50 10.80)"><path d="M-1.6 -2.5 L1.3 0 L-1.6 2.5" fill="none" stroke="#1c1c1c" stroke-width="1.35" stroke-linecap="round" stroke-linejoin="round"/></g></svg>
<span style='left:82.90px;top:316.14px;line-height:16px;font-family:"Liberation Sans", sans-serif;font-size:12px;color:#1a1a1a;white-space:pre;letter-spacing:0.152px;'>Базовые шаблоны</span>
<div style="left:29px;top:331.3px;width:1px;height:15px;background:#a19a96;"></div>
<div style="left:69px;top:331.3px;width:1px;height:4.0px;background:#a19a96;"></div>
<div style="left:75px;top:338px;width:5px;height:1px;background:#a19a96;"></div>
<svg style="left:59px;top:328px" width="20" height="20"><g transform="translate(10.50 10.80)"><path d="M-1.6 -2.5 L1.3 0 L-1.6 2.5" fill="none" stroke="#1c1c1c" stroke-width="1.35" stroke-linecap="round" stroke-linejoin="round"/></g></svg>
<span style='left:82.90px;top:331.14px;line-height:16px;font-family:"Liberation Sans", sans-serif;font-size:12px;color:#1a1a1a;white-space:pre;letter-spacing:0.100px;'>Простая обработка</span>
<div style="left:29px;top:346.3px;width:1px;height:4.0px;background:#a19a96;"></div>
<div style="left:29px;top:357.8px;width:1px;height:4.5px;background:#a19a96;"></div>
<div style="left:35px;top:353px;width:5px;height:1px;background:#a19a96;"></div>
<svg style="left:19px;top:343px" width="20" height="20"><g transform="translate(10.50 10.80)"><path d="M-2.6 -1.4 L0 1.4 L2.6 -1.4" fill="none" stroke="#1c1c1c" stroke-width="1.35" stroke-linecap="round" stroke-linejoin="round"/></g></svg>
<svg style="left:43.5px;top:346.3px" width="16" height="16" viewBox="0 0 16 16"><path d="M1 3.6 L8 1 L15 3.6 L15 11.8 L8 14.8 L1 11.8 Z" fill="#ffcf4e" stroke="#e6a822" stroke-width=".8" stroke-linejoin="round"/><path d="M1 3.6 L8 1 L15 3.6 L8 6 Z" fill="#fff0b8" stroke="#ecb73a" stroke-width=".6" stroke-linejoin="round"/><path d="M8 6 V14.6" stroke="#f3b930" stroke-width=".7"/><path d="M2.2 5.2 L7 6.9 V13" fill="none" stroke="#ffe596" stroke-width="1"/></svg>
<span style='left:64.80px;top:346.64px;line-height:16px;font-family:"Liberation Sans", sans-serif;font-size:12px;color:#1a1a1a;white-space:pre;letter-spacing:0.390px;'>Архивы</span>
<div style="left:29px;top:362.3px;width:1px;height:15px;background:#a19a96;"></div>
<div style="left:49px;top:362.3px;width:1px;height:3.999999999999943px;background:#a19a96;"></div>
<div style="left:49px;top:373.8px;width:1px;height:3.5px;background:#a19a96;"></div>
<div style="left:55px;top:369px;width:5px;height:1px;background:#a19a96;"></div>
<svg style="left:39px;top:359px" width="20" height="20"><g transform="translate(10.50 10.80)"><path d="M-2.6 -1.4 L0 1.4 L2.6 -1.4" fill="none" stroke="#1c1c1c" stroke-width="1.35" stroke-linecap="round" stroke-linejoin="round"/></g></svg>
<span style='left:62.90px;top:362.14px;line-height:16px;font-family:"Liberation Sans", sans-serif;font-size:12px;font-style:italic;color:#1a1a1a;white-space:pre;letter-spacing:0.258px;'>Модуль:</span>
<div style="left:29px;top:377.3px;width:1px;height:16px;background:#a19a96;"></div>
<div style="left:49px;top:377.3px;width:1px;height:16px;background:#a19a96;"></div>
<div style="left:69px;top:377.3px;width:1px;height:4.0px;background:#a19a96;"></div>
<div style="left:69px;top:388.8px;width:1px;height:4.5px;background:#a19a96;"></div>
<div style="left:75px;top:384px;width:5px;height:1px;background:#a19a96;"></div>
<svg style="left:59px;top:374px" width="20" height="20"><g transform="translate(10.50 10.80)"><path d="M-2.6 -1.4 L0 1.4 L2.6 -1.4" fill="none" stroke="#1c1c1c" stroke-width="1.35" stroke-linecap="round" stroke-linejoin="round"/></g></svg>
<svg style="left:83.5px;top:377.29999999999995px" width="16" height="16" viewBox="0 0 16 16"><path d="M2 2.6 C2 .2 14.6 .2 14.6 2.6 V10 H2Z" fill="#c4c9cf" stroke="#7a828a" stroke-width=".7"/><ellipse cx="8.3" cy="2.7" rx="6.3" ry="1.9" fill="#eef0f3" stroke="#8a9098" stroke-width=".6"/><path d="M3 5.6 V9" stroke="#f2f4f6" stroke-width="1.2"/><rect x=".6" y="9" width="6.4" height="6.6" rx=".8" fill="#f6c93c" stroke="#c08e18" stroke-width=".6"/><rect x="6.6" y="7.6" width="4.8" height="8" fill="#44b44e" stroke="#1f7a2a" stroke-width=".6"/><rect x="10.4" y="4.6" width="5.2" height="9.6" fill="#3c7cda" stroke="#1f4aa0" stroke-width=".6"/><rect x="10.8" y="5" width="4.4" height="2.2" fill="#9cc4f4"/></svg>
<span style='left:104.80px;top:377.64px;line-height:16px;font-family:"Liberation Sans", sans-serif;font-size:12px;color:#1a1a1a;white-space:pre;letter-spacing:0.109px;'>Архиватор на БД</span>
<div style="left:29px;top:393.3px;width:1px;height:15px;background:#a19a96;"></div>
<div style="left:49px;top:393.3px;width:1px;height:15px;background:#a19a96;"></div>
<div style="left:69px;top:393.3px;width:1px;height:15px;background:#a19a96;"></div>
<div style="left:89px;top:393.3px;width:1px;height:4.0px;background:#a19a96;"></div>
<div style="left:89px;top:404.8px;width:1px;height:3.5px;background:#a19a96;"></div>
<div style="left:95px;top:400px;width:5px;height:1px;background:#a19a96;"></div>
<svg style="left:79px;top:390px" width="20" height="20"><g transform="translate(10.50 10.80)"><path d="M-1.6 -2.5 L1.3 0 L-1.6 2.5" fill="none" stroke="#1c1c1c" stroke-width="1.35" stroke-linecap="round" stroke-linejoin="round"/></g></svg>
<span style='left:102.90px;top:393.14px;line-height:16px;font-family:"Liberation Sans", sans-serif;font-size:12px;font-style:italic;color:#1a1a1a;white-space:pre;letter-spacing:0.230px;'>Архиватор сообщений:</span>
<div style="left:29px;top:408.3px;width:1px;height:15px;background:#a19a96;"></div>
<div style="left:49px;top:408.3px;width:1px;height:15px;background:#a19a96;"></div>
<div style="left:69px;top:408.3px;width:1px;height:15px;background:#a19a96;"></div>
<div style="left:89px;top:408.3px;width:1px;height:4.0px;background:#a19a96;"></div>
<div style="left:95px;top:415px;width:5px;height:1px;background:#a19a96;"></div>
<svg style="left:79px;top:405px" width="20" height="20"><g transform="translate(10.50 10.80)"><path d="M-2.6 -1.4 L0 1.4 L2.6 -1.4" fill="none" stroke="#1c1c1c" stroke-width="1.35" stroke-linecap="round" stroke-linejoin="round"/></g></svg>
<span style='left:102.90px;top:408.14px;line-height:16px;font-family:"Liberation Sans", sans-serif;font-size:12px;font-style:italic;color:#1a1a1a;white-space:pre;letter-spacing:0.157px;'>Архиватор значений:</span>
<div style="left:29px;top:423.3px;width:1px;height:15px;background:#a19a96;"></div>
<div style="left:49px;top:423.3px;width:1px;height:15px;background:#a19a96;"></div>
<div style="left:69px;top:423.3px;width:1px;height:15px;background:#a19a96;"></div>
<div style="left:109px;top:423.3px;width:1px;height:8.0px;background:#a19a96;"></div>
<div style="left:109px;top:430px;width:11px;height:1px;background:#a19a96;"></div>
<span style='left:122.90px;top:423.14px;line-height:16px;font-family:"Liberation Sans", sans-serif;font-size:12px;color:#1a1a1a;white-space:pre;letter-spacing:-0.488px;'>1</span>
<div style="left:29px;top:438.3px;width:1px;height:16px;background:#a19a96;"></div>
<div style="left:49px;top:438.3px;width:1px;height:16px;background:#a19a96;"></div>
<div style="left:69px;top:438.3px;width:1px;height:4.0px;background:#a19a96;"></div>
<div style="left:69px;top:449.8px;width:1px;height:4.5px;background:#a19a96;"></div>
<div style="left:75px;top:445px;width:5px;height:1px;background:#a19a96;"></div>
<svg style="left:59px;top:435px" width="20" height="20"><g transform="translate(10.50 10.80)"><path d="M-1.6 -2.5 L1.3 0 L-1.6 2.5" fill="none" stroke="#1c1c1c" stroke-width="1.35" stroke-linecap="round" stroke-linejoin="round"/></g></svg>
<svg style="left:83.5px;top:438.29999999999995px" width="16" height="16" viewBox="0 0 16 16"><path d="M3 2 H9 L11 .6 L14.6 3.4 V9 H3Z" fill="#f4f6fa" stroke="#a8b4c8" stroke-width=".7"/><path d="M1 6 H7 L8.4 7.6 H15 V15.4 H1Z" fill="#5aa2e6" stroke="#2f6ab4" stroke-width=".7"/><rect x="3" y="9.6" width="5.4" height="4.6" fill="#f2c83a" stroke="#b88a18" stroke-width=".5"/></svg>
<span style='left:104.80px;top:438.64px;line-height:16px;font-family:"Liberation Sans", sans-serif;font-size:12px;color:#1a1a1a;white-space:pre;letter-spacing:0.054px;'>Архиватор на файлы</span>
</div>
<svg style="left:262px;top:117px" width="20" height="20"><g transform="translate(10.50 10.30)"><path d="M-3.8 2.15 L0 -2.15 L3.8 2.15" fill="none" stroke="#222" stroke-width="1.7" stroke-linecap="round" stroke-linejoin="round"/></g></svg>
<div style="left:266.2px;top:135px;width:12.6px;height:428px;background:#b4aca9;border-radius:4px;box-shadow:inset 1px 1px 1px rgba(70,62,58,.55),inset -1px 0 0 rgba(70,62,58,.25),0 1px 0 rgba(255,255,255,.5);"></div>
<div style="left:267.7px;top:210.4px;width:9.7px;height:228.2px;border-radius:3px;border:1px solid #6d6865;background:linear-gradient(to right,#e9e6e4,#d5d1cf);"></div>
<svg style="left:262px;top:560px" width="20" height="20"><g transform="translate(10.50 10.60)"><path d="M-3.8 2.15 L0 -2.15 L3.8 2.15" fill="none" stroke="#222" stroke-width="1.7" stroke-linecap="round" stroke-linejoin="round"/></g></svg>
<svg style="left:262px;top:574px" width="20" height="20"><g transform="translate(10.50 10.60)"><path d="M-3.8 -2.15 L0 2.15 L3.8 -2.15" fill="none" stroke="#222" stroke-width="1.7" stroke-linecap="round" stroke-linejoin="round"/></g></svg>
<svg style="left:42px;top:591px" width="20" height="20"><g transform="translate(10.60 10.20)"><path d="M2.15 -3.8 L-2.15 0 L2.15 3.8" fill="none" stroke="#9a9491" stroke-width="1.2" stroke-linecap="round" stroke-linejoin="round"/></g></svg>
<div style="left:59.8px;top:594.6px;width:174px;height:13.2px;background:#b4aca9;border-radius:4px;box-shadow:inset 1px 1px 1px rgba(70,62,58,.55),inset -1px 0 0 rgba(70,62,58,.25),0 1px 0 rgba(255,255,255,.5);"></div>
<div style="left:62px;top:596.2px;width:58.2px;height:10px;border-radius:3px;border:1px solid #6d6865;background:linear-gradient(#ebe8e6,#d3cfcd);"></div>
<svg style="left:231px;top:591px" width="20" height="20"><g transform="translate(10.40 10.20)"><path d="M2.15 -3.8 L-2.15 0 L2.15 3.8" fill="none" stroke="#a09a97" stroke-width="1.2" stroke-linecap="round" stroke-linejoin="round"/></g></svg>
<svg style="left:245px;top:591px" width="20" height="20"><g transform="translate(10.20 10.20)"><path d="M-2.15 -3.8 L2.15 0 L-2.15 3.8" fill="none" stroke="#222" stroke-width="1.7" stroke-linecap="round" stroke-linejoin="round"/></g></svg>
<div class="le" style="left:47.5px;top:616.6px;width:231px;height:17.6px"></div>
<div style="left:281.4px;top:248px;width:1.4px;height:1.4px;background:#8e8885;border-radius:50%;"></div>
<div style="left:281.4px;top:251px;width:1.4px;height:1.4px;background:#8e8885;border-radius:50%;"></div>
<div style="left:281.4px;top:254px;width:1.4px;height:1.4px;background:#8e8885;border-radius:50%;"></div>
<div style="left:281.4px;top:500px;width:1.4px;height:1.4px;background:#8e8885;border-radius:50%;"></div>
<div style="left:281.4px;top:503px;width:1.4px;height:1.4px;background:#8e8885;border-radius:50%;"></div>
<div style="left:281.4px;top:506px;width:1.4px;height:1.4px;background:#8e8885;border-radius:50%;"></div>
<div style="left:284px;top:119px;width:555px;height:1px;background:#fff;"></div>
<div style="left:284px;top:119px;width:1px;height:518px;background:#fff;"></div>
<div style="left:285px;top:120px;width:1px;height:516px;background:rgba(255,255,255,.35);"></div>
<div style="left:285px;top:120px;width:553px;height:1px;background:rgba(255,255,255,.35);"></div>
<div style="left:837px;top:120px;width:1px;height:517px;background:#77726f;"></div>
<div style="left:838px;top:119px;width:1px;height:518px;background:#2c2a29;"></div>
<div style="left:285px;top:635px;width:554px;height:1px;background:#5c5754;"></div>
<div style="left:284px;top:636px;width:555px;height:1px;background:#2c2a29;"></div>
<span style='left:429.70px;top:127.06px;line-height:22px;font-family:"Liberation Sans", sans-serif;font-size:18px;font-weight:bold;font-style:italic;color:#1c1c1c;white-space:pre;letter-spacing:0.018px;'>Контроллер: Постобработка</span>
<div style="left:292px;top:174px;width:540px;height:455px;border-radius:4px;background:rgba(255,255,255,.14);box-shadow:inset 0 0 0 1px rgba(120,112,108,.0);border:1px solid;border-color:#fbfaf9 #f3f1f0 #f6f5f4 #8f8885;"></div>
<div style="left:293px;top:627px;width:537px;height:1px;background:rgba(110,102,98,.55);"></div>
<div style="left:830px;top:178px;width:1px;height:447px;background:rgba(110,102,98,.25);"></div>
<div style="left:293px;top:176px;width:1px;height:450px;background:rgba(255,255,255,.25);"></div>
<div style="left:380px;top:154.2px;width:79px;height:20.3px;border-radius:4.5px 4.5px 0 0;border:1px solid;border-color:#fbfaf9 #f7f6f5 #0000 #f7f6f5;background:linear-gradient(#dedbd9,#d3cfcd 50%,#c8c3c0);box-shadow:0 0 0 .6px rgba(130,122,118,.35);"></div>
<span style='left:387.10px;top:157.64px;line-height:16px;font-family:"Liberation Sans", sans-serif;font-size:12px;color:#1a1a1a;white-space:pre;letter-spacing:0.179px;'>Параметры</span>
<div style="left:292px;top:152.3px;width:84.4px;height:23px;border-radius:5px 5px 0 0;border:1px solid;border-color:#fdfcfc #9d9794 #0000 #8f8885;background:linear-gradient(#eeedec,#dedbd9);"></div>
<div style="left:293px;top:154px;width:1px;height:22px;background:rgba(255,255,255,.7);"></div>
<div style="left:293px;top:173.5px;width:82.4px;height:2.5px;background:#dedbd9;"></div>
<span style='left:298.90px;top:157.64px;line-height:16px;font-family:"Liberation Sans", sans-serif;font-size:12px;color:#1a1a1a;white-space:pre;letter-spacing:0.452px;'>Контроллер</span>
<div style="left:297px;top:179px;width:514.5px;height:444.5px;border-radius:4px;background:#d6d2d0;box-shadow:0 0 0 1px rgba(255,255,255,.0);border:1px solid;border-color:#8d8683 #e9e7e6 #efeeed #b5afac;"></div>
<div style="left:302.5px;top:180px;width:503.3px;height:110px;border-radius:3px 3px 0 0;background:linear-gradient(rgba(255,255,255,.3),rgba(255,255,255,.0) 96%);"></div>
<div style="left:302.5px;top:181px;width:1px;height:106px;background:linear-gradient(rgba(255,255,255,.8),rgba(255,255,255,0));"></div>
<div style="left:804.5px;top:181px;width:1px;height:106px;background:linear-gradient(rgba(255,255,255,.8),rgba(255,255,255,0));"></div>
<div style="left:302.5px;top:292.6px;width:503.3px;height:330px;border-radius:4px 4px 0 0;background:linear-gradient(rgba(255,255,255,.32),rgba(255,255,255,.05) 96%);border-top:1px solid rgba(255,255,255,.9);"></div>
<div style="left:302.5px;top:295px;width:1px;height:325px;background:linear-gradient(rgba(255,255,255,.85),rgba(255,255,255,.1));"></div>
<div style="left:804.5px;top:295px;width:1px;height:325px;background:linear-gradient(rgba(255,255,255,.85),rgba(255,255,255,.1));"></div>
<span style='left:306.70px;top:187.34px;line-height:16px;font-family:"Liberation Sans", sans-serif;font-size:12px;color:#1a1a1a;white-space:pre;letter-spacing:-0.080px;'>Статус:</span>
<span style='left:352.70px;top:189.14px;line-height:16px;font-family:"Liberation Sans", sans-serif;font-size:12px;font-weight:bold;color:#1a1a1a;white-space:pre;letter-spacing:-0.100px;'>0:Запущен. Вызовы с периодом: 100мс. Затрачено времени: 0.595мс.</span>
<span style='left:306.70px;top:213.34px;line-height:16px;font-family:"Liberation Sans", sans-serif;font-size:12px;color:#1a1a1a;white-space:pre;letter-spacing:0.283px;'>Включен:</span>
<div class="cb" style="left:369.2px;top:212.0px;width:16.6px;height:15.4px"></div>
<svg style="left:369px;top:212px" width="18" height="18"><path transform="translate(0.80 0.30)" d="M3.3 8.1 L6.8 11.8 L13.1 3.8" fill="none" stroke="#1c1c1c" stroke-width="1.9" stroke-linecap="round" stroke-linejoin="round"/></svg>
<span style='left:306.70px;top:237.34px;line-height:16px;font-family:"Liberation Sans", sans-serif;font-size:12px;color:#1a1a1a;white-space:pre;letter-spacing:0.100px;'>Запущен:</span>
<div class="cb" style="left:368.5px;top:236.0px;width:16.6px;height:15.4px"></div>
<svg style="left:369px;top:236px" width="18" height="18"><path transform="translate(0.10 0.30)" d="M3.3 8.1 L6.8 11.8 L13.1 3.8" fill="none" stroke="#1c1c1c" stroke-width="1.9" stroke-linecap="round" stroke-linejoin="round"/></svg>
<span style='left:306.70px;top:262.54px;line-height:16px;font-family:"Liberation Sans", sans-serif;font-size:12px;color:#1a1a1a;white-space:pre;letter-spacing:0.167px;'>БД контроллера:</span>
<div style="left:410.5px;top:260.4px;width:165.4px;height:18.2px;border-radius:4px;border:1px solid #a39d9a;background:linear-gradient(#f6f5f4,#dcd9d7);box-shadow:0 1px 1px rgba(0,0,0,.22);"></div>
<span style='left:415.10px;top:262.54px;line-height:16px;font-family:"Liberation Sans", sans-serif;font-size:12px;color:#1a1a1a;white-space:pre;letter-spacing:0.091px;'>SQLite.logilev_stan1050</span>
<svg style="left:556px;top:259px" width="20" height="20"><g transform="translate(10.50 10.80)"><path d="M-3.6 -2.2 L0 2.2 L3.6 -2.2" fill="none" stroke="#222" stroke-width="1.5" stroke-linecap="round" stroke-linejoin="round"/></g></svg>
<span style='left:511.90px;top:297.34px;line-height:16px;font-family:"Liberation Sans", sans-serif;font-size:12px;color:#1a1a1a;white-space:pre;letter-spacing:0.224px;'>Конфигурация</span>
<span style='left:306.70px;top:321.34px;line-height:16px;font-family:"Liberation Sans", sans-serif;font-size:12px;color:#1a1a1a;white-space:pre;letter-spacing:0.528px;'>ID:</span>
<span style='left:328.00px;top:322.34px;line-height:16px;font-family:"Liberation Sans", sans-serif;font-size:12px;font-weight:bold;color:#1a1a1a;white-space:pre;letter-spacing:0.011px;'>post_proc</span>
<span style='left:306.70px;top:347.04px;line-height:16px;font-family:"Liberation Sans", sans-serif;font-size:12px;color:#1a1a1a;white-space:pre;letter-spacing:0.560px;'>Имя:</span>
<div class="le" style="left:343.4px;top:345.4px;width:455.9px;height:18px;"></div>
<span style='left:346.00px;top:347.34px;line-height:16px;font-family:"Liberation Sans", sans-serif;font-size:12px;color:#1a1a1a;white-space:pre;letter-spacing:0.214px;'>Постобработка</span>
<span style='left:306.70px;top:369.24px;line-height:16px;font-family:"Liberation Sans", sans-serif;font-size:12px;color:#1a1a1a;white-space:pre;letter-spacing:0.107px;'>Описание:</span>
<div style="left:307.8px;top:387.6px;width:492.4px;height:70.6px;background:#fff;border:1px solid;border-color:#7f7a77 #b9b4b1 #d8d5d3 #a7a19e;border-radius:2px;box-shadow:0 1px 0 rgba(255,255,255,.7);"></div>
<span style='left:306.70px;top:467.14px;line-height:16px;font-family:"Liberation Sans", sans-serif;font-size:12px;color:#1a1a1a;white-space:pre;letter-spacing:0.191px;'>Включать:</span>
<div class="cb" style="left:373.4px;top:466.1px;width:16.6px;height:15.4px"></div>
<svg style="left:374px;top:466px" width="18" height="18"><path transform="translate(0.00 0.40)" d="M3.3 8.1 L6.8 11.8 L13.1 3.8" fill="none" stroke="#1c1c1c" stroke-width="1.9" stroke-linecap="round" stroke-linejoin="round"/></svg>
<span style='left:306.70px;top:491.34px;line-height:16px;font-family:"Liberation Sans", sans-serif;font-size:12px;color:#1a1a1a;white-space:pre;letter-spacing:0.056px;'>Запускать:</span>
<div class="cb" style="left:374.4px;top:490.1px;width:16.6px;height:15.4px"></div>
<svg style="left:375px;top:490px" width="18" height="18"><path transform="translate(0.00 0.40)" d="M3.3 8.1 L6.8 11.8 L13.1 3.8" fill="none" stroke="#1c1c1c" stroke-width="1.9" stroke-linecap="round" stroke-linejoin="round"/></svg>
<span style='left:306.70px;top:515.64px;line-height:16px;font-family:"Liberation Sans", sans-serif;font-size:12px;color:#1a1a1a;white-space:pre;letter-spacing:0.072px;'>Таблица параметров по шаблону:</span>
<div class="le" style="left:506.3px;top:514.6px;width:293.0px;height:17.8px;"></div>
<span style='left:509.30px;top:515.84px;line-height:16px;font-family:"Liberation Sans", sans-serif;font-size:12px;color:#1a1a1a;white-space:pre;letter-spacing:0.081px;'>LogLevPrm_post_proc</span>
<span style='left:306.70px;top:542.34px;line-height:16px;font-family:"Liberation Sans", sans-serif;font-size:12px;color:#1a1a1a;white-space:pre;letter-spacing:0.136px;'>Таблица параметров для отражения:</span>
<div class="le" style="left:526.6px;top:540.5px;width:272.7px;height:17.8px;"></div>
<span style='left:529.50px;top:542.14px;line-height:16px;font-family:"Liberation Sans", sans-serif;font-size:12px;color:#1a1a1a;white-space:pre;letter-spacing:0.133px;'>LogLevPrmRefl_post_proc</span>
<span style='left:306.70px;top:567.54px;line-height:16px;font-family:"Liberation Sans", sans-serif;font-size:12px;color:#1a1a1a;white-space:pre;letter-spacing:0.155px;'>Планирование вычислений:</span>
<div class="le" style="left:474.2px;top:566.4px;width:325.1px;height:17.9px;"></div>
<span style='left:479.10px;top:567.94px;line-height:16px;font-family:"Liberation Sans", sans-serif;font-size:12px;color:#1a1a1a;white-space:pre;letter-spacing:-0.344px;'>0.1</span>
<svg style="left:779px;top:565px" width="20" height="20"><g transform="translate(10.80 10.20)"><path d="M-3.6 -2.2 L0 2.2 L3.6 -2.2" fill="none" stroke="#222" stroke-width="1.5" stroke-linecap="round" stroke-linejoin="round"/></g></svg>
<span style='left:306.70px;top:594.34px;line-height:16px;font-family:"Liberation Sans", sans-serif;font-size:12px;color:#1a1a1a;white-space:pre;letter-spacing:0.146px;'>Уровень приоритета задачи получения данных:</span>
<div class="le" style="left:586.2px;top:592.2px;width:100.2px;height:17.9px;"></div>
<span style='left:589.70px;top:594.54px;line-height:16px;font-family:"Liberation Sans", sans-serif;font-size:12px;color:#1a1a1a;white-space:pre;'>1</span>
<svg style="left:667px;top:587px" width="20" height="20"><g transform="translate(10.50 10.30)"><path d="M-3.9 2.0 L0 -2.0 L3.9 2.0" fill="none" stroke="#222" stroke-width="1.4" stroke-linecap="round" stroke-linejoin="round"/></g></svg>
<svg style="left:667px;top:595px" width="20" height="20"><g transform="translate(10.50 10.90)"><path d="M-3.9 -2.0 L0 2.0 L3.9 -2.0" fill="none" stroke="#222" stroke-width="1.4" stroke-linecap="round" stroke-linejoin="round"/></g></svg>
<svg style="left:810px;top:174px" width="20" height="20"><g transform="translate(10.50 10.80)"><path d="M-3.8 2.15 L0 -2.15 L3.8 2.15" fill="none" stroke="#222" stroke-width="1.7" stroke-linecap="round" stroke-linejoin="round"/></g></svg>
<div style="left:814.2px;top:192.4px;width:12.6px;height:403px;background:#b4aca9;border-radius:4px;box-shadow:inset 1px 1px 1px rgba(70,62,58,.55),inset -1px 0 0 rgba(70,62,58,.25),0 1px 0 rgba(255,255,255,.5);"></div>
<div style="left:815.7px;top:215.6px;width:9.7px;height:379.4px;border-radius:3px;border:1px solid #6d6865;background:linear-gradient(to right,#e9e6e4,#d5d1cf);"></div>
<svg style="left:810px;top:593px" width="20" height="20"><g transform="translate(10.50 10.40)"><path d="M-3.8 2.15 L0 -2.15 L3.8 2.15" fill="none" stroke="#222" stroke-width="1.7" stroke-linecap="round" stroke-linejoin="round"/></g></svg>
<svg style="left:810px;top:607px" width="20" height="20"><g transform="translate(10.50 10.80)"><path d="M-3.8 -2.15 L0 2.15 L3.8 -2.15" fill="none" stroke="#a59f9c" stroke-width="1.2" stroke-linecap="round" stroke-linejoin="round"/></g></svg>
<div style="left:842.2px;top:349px;width:1.3px;height:1.3px;background:#8e8885;border-radius:50%;"></div>
<div style="left:842.2px;top:352px;width:1.3px;height:1.3px;background:#8e8885;border-radius:50%;"></div>
<div style="left:842.2px;top:355px;width:1.3px;height:1.3px;background:#8e8885;border-radius:50%;"></div>
<div style="left:767px;top:644px;width:14.4px;height:15.8px;background:#e8e6e5;border:1px solid;border-color:#fff #262422 #262422 #fff;box-shadow:inset -1px -1px 0 #9a9592;"></div>
<svg style="left:763px;top:641px" width="20" height="20"><g transform="translate(10.60 10.90)"><path d="M-3.6 -2.1 H3.6 L0 2.1 Z" fill="#111"/></g></svg>
<span style='left:787.50px;top:644.00px;line-height:17px;font-family:"Liberation Sans", sans-serif;font-size:13px;color:#2a2a2a;white-space:pre;'>*</span>
<span style='left:799.80px;top:642.40px;line-height:17px;font-family:"Liberation Sans", sans-serif;font-size:13px;color:#ff0000;white-space:pre;letter-spacing:0.565px;'>root</span>
<div style="left:841.6px;top:661.6px;width:1.4px;height:1.4px;background:#fff;border-radius:50%;box-shadow:-.7px -.7px 0 rgba(80,75,72,.7);"></div>
<div style="left:841.6px;top:664.4px;width:1.4px;height:1.4px;background:#fff;border-radius:50%;box-shadow:-.7px -.7px 0 rgba(80,75,72,.7);"></div>
<div style="left:838.8px;top:664.4px;width:1.4px;height:1.4px;background:#fff;border-radius:50%;box-shadow:-.7px -.7px 0 rgba(80,75,72,.7);"></div>
</body>
</html>
